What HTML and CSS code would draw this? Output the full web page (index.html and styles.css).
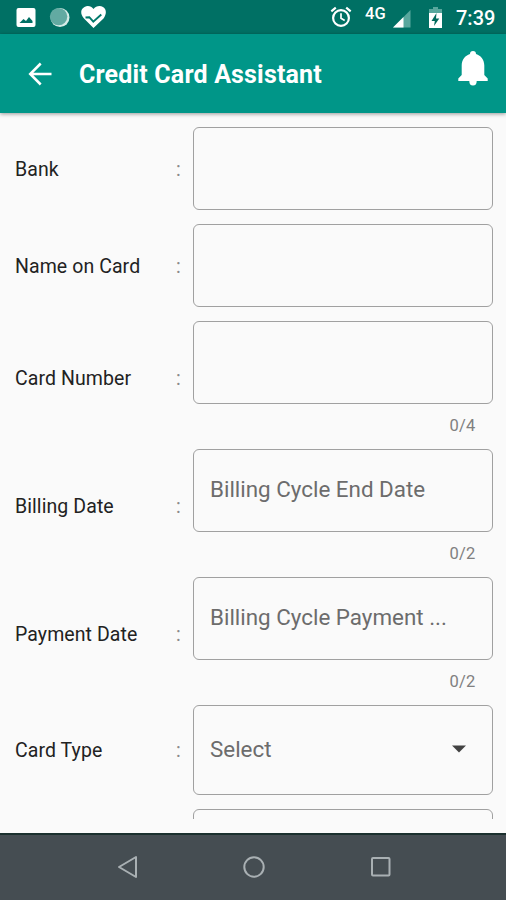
FILE: index.html
```html
<!DOCTYPE html>
<html lang="en">
<head>
<meta charset="utf-8">
<title>Credit Card Assistant</title>
<link rel="stylesheet" href="styles.css">
</head>
<body>
<div class="screen">
  <div class="status">
    <svg class="status-left" width="120" height="34" viewBox="0 0 120 34">
      <path fill="#fff" fill-rule="evenodd" d="M18.500 8h15a2 2 0 0 1 2 2v15a2 2 0 0 1-2 2h-15a2 2 0 0 1-2-2v-15a2 2 0 0 1 2-2zM19.500 23h13v-2l-3.500-4-3 4-2.500-2z"/>
      <circle cx="60" cy="17.500" r="9.500" fill="#d5ebe7"/>
      <circle cx="58.600" cy="16.600" r="8.700" fill="#62aaa2"/>
      <path fill="#fff" d="M93.500 28 84 18.500C80 14 80.500 9 84.500 7c3.500-2 7-.5 9 2 2-2.500 6-4 9.500-2 4 2.500 3.500 7.500.5 11.500z"/>
      <path d="m85.500 17.500 3.800-.3 4 4.500 8-7.200" fill="none" stroke="#00796b" stroke-width="1.900"/>
    </svg>
    <svg class="alarm" width="22" height="22" viewBox="0 0 22 22" fill="none" stroke="#fff" stroke-width="2.200">
      <circle cx="11" cy="12" r="7.900"/><path d="m1.300 5.300 4.500-3.700M20.700 5.300l-4.500-3.700"/><path d="M11 7.300v5l3.700 2.200" stroke-width="1.700"/>
    </svg>
    <span class="network">4G</span>
    <svg class="signal" width="18" height="18" viewBox="0 0 18 18"><path fill="#58a79d" d="M17.500 0v17.500H0z"/><path fill="#fff" d="M10.500 7v10.500H0z"/></svg>
    <svg class="battery" width="13" height="22" viewBox="0 0 13 22"><path fill="#58a79d" d="M4 0h5v2h4v5H0V2h4z"/><path fill="#fff" d="M0 6h13v15H0z"/><path fill="#00695c" d="M7.500 6 2.500 14h3.300l-.8 5 5.300-7.500H7z"/></svg>
    <span class="clock">7:39</span>
  </div>
  <header class="appbar">
    <svg class="back" width="24" height="24" viewBox="0 0 24 24" fill="none" stroke="#fff" stroke-width="2.500"><path d="M23.500 12H2.500M12.700 1.500 2.200 12l10.500 10.500"/></svg>
    <h1>Credit Card Assistant</h1>
    <svg class="bell" width="30" height="36" viewBox="0 0 30 36" fill="#fff"><path d="M15 0a3 3 0 0 1 3 3c5 1.500 8.300 6 8.300 11.500V24l3.400 3.500V30H.3v-2.500L3.700 24v-9.500C3.700 9 7 4.500 12 3a3 3 0 0 1 3-3zM11.300 30h7.400a3.700 4.500 0 0 1-7.400 0z"/></svg>
  </header>
  <main class="form">
    <div class="row"><label>Bank</label><span class="colon">:</span><div class="control"><div class="field"></div></div></div>
    <div class="row"><label>Name on Card</label><span class="colon">:</span><div class="control"><div class="field"></div></div></div>
    <div class="row"><label>Card Number</label><span class="colon">:</span><div class="control"><div class="field"></div><div class="counter">0/4</div></div></div>
    <div class="row"><label>Billing Date</label><span class="colon">:</span><div class="control"><div class="field">Billing Cycle End Date</div><div class="counter">0/2</div></div></div>
    <div class="row"><label>Payment Date</label><span class="colon">:</span><div class="control"><div class="field">Billing Cycle Payment ...</div><div class="counter">0/2</div></div></div>
    <div class="row"><label>Card Type</label><span class="colon">:</span><div class="control"><div class="field select"><span>Select</span><svg width="14" height="8" viewBox="0 0 14 8"><path d="M0 .5h14L7 7.500z" fill="#424242"/></svg></div></div></div>
    <div class="row"><label></label><span class="colon"></span><div class="control"><div class="field"></div></div></div>
  </main>
  <nav class="navbar">
    <svg width="22" height="24" viewBox="0 0 22 24"><path d="M20 2v20L3 12z"/></svg>
    <svg width="24" height="24" viewBox="0 0 24 24"><circle cx="12" cy="12" r="9.700"/></svg>
    <svg width="22" height="22" viewBox="0 0 22 22"><rect x="2" y="2" width="17.500" height="17.500" rx="1"/></svg>
  </nav>
</div>
</body>
</html>
```
FILE: styles.css
```css
* { box-sizing: border-box; }
body { margin: 0; font-family: Roboto, "Liberation Sans", sans-serif; }
.screen { width: 506px; height: 900px; display: flex; flex-direction: column; background: #fafafa; overflow: hidden; }
.status { height: 34px; flex: none; display: flex; align-items: flex-start; background: #007064; color: #fff; }
.status svg { flex: none; }
.alarm { margin: 6px 0 0 210px; }
.network { width: 24px; margin: 4px 0 0 13px; font-size: 16.500px; line-height: 20px; font-weight: 500; white-space: nowrap; }
.signal { margin: 10px 0 0 4px; }
.battery { margin: 7px 0 0 18px; }
.clock { margin: 6px 0 0 14px; font-size: 20px; line-height: 24px; font-weight: 500; white-space: nowrap; }
.appbar { height: 79px; flex: none; display: flex; align-items: center; padding: 0 18px 0 28px; background: #009688; color: #fff; box-shadow: 0 1px 4px rgba(0, 0, 0, .4); z-index: 1; }
.appbar h1 { flex: 1; margin: 2px 0 0 27px; font-size: 25px; letter-spacing: .17px; line-height: 30px; font-weight: 700; white-space: nowrap; }
.bell { margin-bottom: 10px; }
.form { height: 706px; flex: none; overflow: hidden; display: flex; flex-direction: column; gap: 14px; padding: 14px 13px 0 15px; }
.row { flex: none; display: grid; grid-template-columns: 157px 20.500px 300px; align-items: center; font-size: 19.500px; line-height: 24px; color: #222; }
.row label { padding-top: 2px; letter-spacing: .08px; white-space: nowrap; }
.colon { padding: 2px 0 0 4px; color: #8a8a8a; }
.field { height: 83px; border: 1.500px solid #a0a0a0; border-radius: 6px; padding: 0 16.500px 3px; display: flex; align-items: center; font-size: 22.400px; line-height: 28px; color: #6c6c6c; white-space: nowrap; }
.counter { height: 31px; padding: 10px 17px 0 0; text-align: right; font-size: 16.500px; line-height: 24px; letter-spacing: .2px; color: #808080; }
.select { height: 90px; justify-content: space-between; padding-right: 26px; }
.navbar { height: 67px; margin-top: auto; flex: none; display: flex; justify-content: center; align-items: center; gap: 104px; padding: 0 0 2px 1px; border-top: 2px solid #1b302e; background: #454d52; }
.navbar svg { fill: none; stroke: #a9b0b3; stroke-width: 2; stroke-linejoin: round; }
```
